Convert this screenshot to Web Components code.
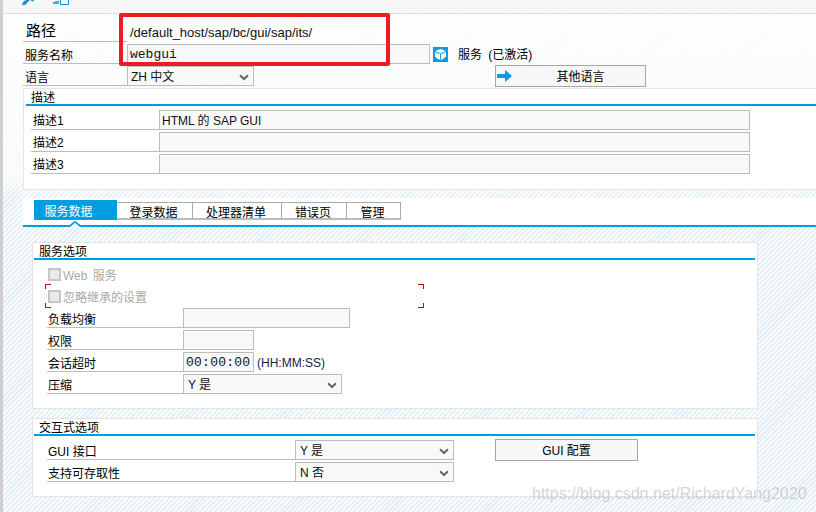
<!DOCTYPE html>
<html>
<head>
<meta charset="utf-8">
<style>
html,body{margin:0;padding:0;background:#fff;}
</style>
</head>
<body>
<sap-page>
  <sap-toolbar></sap-toolbar>
  <sap-header>
    <sap-row label="路径" lw="104" big><sap-field w="303" kind="plain">/default_host/sap/bc/gui/sap/its/</sap-field></sap-row>
    <sap-row label="服务名称" lw="104" lp="2"><sap-field w="303" kind="mono">webgui</sap-field><sap-status>服务 (已激活)</sap-status></sap-row>
    <sap-row label="语言" lw="104" lp="2"><sap-field w="127" kind="select">ZH 中文</sap-field><sap-button w="151" gap="241" arrow>其他语言</sap-button></sap-row>
  </sap-header>
  <sap-panel title="描述" h="102" w="800" x="19" pad="2" tx="5">
    <sap-row label="描述1" lw="128" lp="2" lh="23"><sap-field w="591">HTML 的 SAP GUI</sap-field></sap-row>
    <sap-row label="描述2" lw="128" lp="2" lh="23"><sap-field w="591"></sap-field></sap-row>
    <sap-row label="描述3" lw="128" lp="2" lh="23"><sap-field w="591"></sap-field></sap-row>
  </sap-panel>
  <sap-tabs>
    <sap-tab active w="83">服务数据</sap-tab><sap-tab w="76">登录数据</sap-tab><sap-tab w="89">处理器清单</sap-tab><sap-tab w="65">错误页</sap-tab><sap-tab w="54">管理</sap-tab>
  </sap-tabs>
  <sap-panel title="服务选项" h="167" w="726" x="28" y="15" pad="1" tx="5" bx="13">
    <sap-check>Web 服务</sap-check>
    <sap-check marked>忽略继承的设置</sap-check>
    <sap-row label="负载均衡" lw="136"><sap-field w="167"></sap-field></sap-row>
    <sap-row label="权限" lw="136"><sap-field w="71"></sap-field></sap-row>
    <sap-row label="会话超时" lw="136"><sap-field w="71" kind="mono" style="letter-spacing:.25px">00:00:00</sap-field><sap-hint>(HH:MM:SS)</sap-hint></sap-row>
    <sap-row label="压缩" lw="136"><sap-field w="159" kind="select" style="padding-left:4px">Y 是</sap-field></sap-row>
  </sap-panel>
  <sap-panel title="交互式选项" h="79" w="726" x="28" y="9" pad="1" tx="5" bx="13">
    <sap-row label="GUI 接口" lw="248"><sap-field w="159" kind="select" style="padding-left:4px">Y 是</sap-field><sap-button w="143" gap="41">GUI 配置</sap-button></sap-row>
    <sap-row label="支持可存取性" lw="248"><sap-field w="159" kind="select" style="padding-left:4px">N 否</sap-field></sap-row>
  </sap-panel>
</sap-page>

<script>
const CJK = '"Liberation Sans","Noto Sans CJK SC",sans-serif';

class SapPage extends HTMLElement{
    constructor(){
        super();
        this.attachShadow({ mode: "open" });
    }
    connectedCallback(){
        this.shadowRoot.innerHTML = `
        <style>
        :host{
            display:block;
            position:relative;
            width:816px;
            height:512px;
            overflow:hidden;
            box-sizing:border-box;
            border-left:3px solid #cfcfcf;
            padding-left:1px;
            color:#000;
            font:12px/16px ${CJK};
            background:
              linear-gradient(rgba(255,255,255,.85) 14px, rgba(255,255,255,.55) 180px, rgba(255,255,255,0) 200px),
              repeating-linear-gradient(135deg,#e3edf5 0,#e3edf5 1.5px,#fafcfd 1.5px,#fafcfd 3.5px);
        }
        .redbox{
            position:absolute;
            left:116px;
            top:13px;
            width:271px;
            height:53px;
            box-sizing:border-box;
            border:4px solid #ed1c24;
            border-radius:2px;
        }
        .mark{
            position:absolute;
            left:529px;
            top:484px;
            font:16px/20px "Liberation Sans",sans-serif;
            color:rgba(170,170,170,.5);
            white-space:nowrap;
        }
        </style>
        <slot></slot>
        <div class="redbox"></div>
        <div class="mark">https://blog.csdn.net/RichardYang2020</div>
        `;
    }
}

class SapToolbar extends HTMLElement{
    constructor(){
        super();
        this.attachShadow({ mode: "open" });
    }
    connectedCallback(){
        this.shadowRoot.innerHTML = `
        <style>
        :host{
            display:flex;
            height:14px;
            box-sizing:border-box;
            margin-left:-1px;
            background:#f7f7f7;
            border-bottom:1px solid #dedede;
            padding-left:19px;
            gap:19px;
            overflow:hidden;
        }
        svg{display:block;}
        </style>
        <svg width="12" height="5" viewBox="0 0 12 5"><path d="M0 5 L1 2 L4 0 L8 0 L3 5 Z" fill="#1c8fd2"/><path d="M9 0 H12 L11 1.5 H9.5 Z" fill="#1c8fd2"/></svg>
        <svg width="16" height="6" viewBox="0 0 16 6"><path d="M0 2H2V1H6V4H0Z" fill="#4aa9e2"/><path d="M7 4H15V0H16V5H7Z" fill="#0f94dc"/><path d="M7 0H8V5H7Z" fill="#0f94dc"/></svg>
        `;
    }
}

class SapHeader extends HTMLElement{
    constructor(){
        super();
        this.attachShadow({ mode: "open" });
    }
    connectedCallback(){
        this.shadowRoot.innerHTML = `
        <style>
        :host{
            display:block;
            height:74px;
            box-sizing:border-box;
            padding:6px 0 0 19px;
        }
        </style>
        <slot></slot>
        `;
    }
}

class SapRow extends HTMLElement{
    constructor(){
        super();
        this.attachShadow({ mode: "open" });
    }
    connectedCallback(){
        const big = this.hasAttribute("big");
        this.shadowRoot.innerHTML = `
        <style>
        :host{
            display:flex;
            height:22px;
            box-sizing:border-box;
            padding-top:2px;
        }
        .lb{
            width:${this.getAttribute("lw")}px;
            height:20px;
            flex:none;
            box-sizing:border-box;
            border-bottom:1px solid #bdbdbd;
            padding-left:${big ? 3 : (this.getAttribute("lp") || 1)}px;
            font-size:${big ? 15 : 12}px;
            line-height:${big ? 18 : (this.getAttribute("lh") || 25)}px;
            white-space:nowrap;
        }
        </style>
        <div class="lb">${this.getAttribute("label")}</div>
        <slot></slot>
        `;
    }
}

class SapField extends HTMLElement{
    constructor(){
        super();
        this.attachShadow({ mode: "open" });
    }
    connectedCallback(){
        const kind = this.getAttribute("kind") || "input";
        const mono = kind == "mono";
        const plain = kind == "plain";
        this.shadowRoot.innerHTML = `
        <style>
        :host{
            display:flex;
            align-items:center;
            flex:none;
            width:${this.getAttribute("w")}px;
            height:20px;
            box-sizing:border-box;
            border:${plain ? "0" : "1px solid #bdbdbd"};
            background:${plain ? "transparent" : "#f8f8f8"};
            padding-left:${plain ? 3 : 2}px;
            padding-top:2px;
            white-space:nowrap;
            color:#111;
            ${plain ? "font-size:13px;" : ""}
            ${mono ? 'font:13px/16px "Liberation Mono",monospace;' : ""}
            ${kind == "select" ? "padding-left:3px;" : ""}
        }
        .chev{margin-left:auto;margin-right:4px;}
        </style>
        <slot></slot>
        ${kind == "select" ? '<svg class="chev" width="10" height="7" viewBox="0 0 10 7"><path d="M1 1.2 L5 5 L9 1.2" fill="none" stroke="#666" stroke-width="2"/></svg>' : ""}
        `;
    }
}

class SapStatus extends HTMLElement{
    constructor(){
        super();
        this.attachShadow({ mode: "open" });
    }
    connectedCallback(){
        this.shadowRoot.innerHTML = `
        <style>
        :host{
            display:flex;
            align-items:flex-start;
            height:20px;
            white-space:nowrap;
            line-height:23px;
            word-spacing:3px;
        }
        svg{margin:3px 10px 0 3px;display:block;}
        </style>
        <svg width="15" height="15" viewBox="0 0 15 15">
          <rect width="15" height="15" fill="#0b9be3"/>
          <path d="M7.5 2 Q11 2.5 13 5 V9.5 Q11 12 7.5 13 Q4 12 2 9.5 V5 Q4 2.5 7.5 2 Z" fill="#fff"/>
          <path d="M2.5 5.2 Q7.5 7.8 12.5 5.2 M7.5 7 V12.5" fill="none" stroke="#0b9be3" stroke-width="1"/>
        </svg>
        <slot></slot>
        `;
    }
}

class SapHint extends HTMLElement{
    constructor(){
        super();
        this.attachShadow({ mode: "open" });
    }
    connectedCallback(){
        this.shadowRoot.innerHTML = `
        <style>
        :host{
            display:block;
            margin-left:3px;
            line-height:22px;
            color:#1a1a4a;
            white-space:nowrap;
        }
        </style>
        <slot></slot>
        `;
    }
}

class SapButton extends HTMLElement{
    constructor(){
        super();
        this.attachShadow({ mode: "open" });
    }
    connectedCallback(){
        const arrow = this.hasAttribute("arrow");
        this.shadowRoot.innerHTML = `
        <style>
        :host{
            display:flex;
            align-items:center;
            justify-content:center;
            position:relative;
            flex:none;
            width:${this.getAttribute("w")}px;
            height:22px;
            margin:-1px 0 0 ${this.getAttribute("gap")}px;
            box-sizing:border-box;
            border:1px solid #a6a6a6;
            background:#f7f7f7;
            white-space:nowrap;
            padding-top:2px;
            padding-left:${arrow ? 20 : 0}px;
        }
        svg{position:absolute;left:1px;top:4px;}
        </style>
        ${arrow ? '<svg width="15" height="12" viewBox="0 0 15 12"><path d="M0 4H8V0L15 6L8 12V8H0Z" fill="#0b9be3"/></svg>' : ""}
        <slot></slot>
        `;
    }
}

class SapPanel extends HTMLElement{
    constructor(){
        super();
        this.attachShadow({ mode: "open" });
    }
    connectedCallback(){
        const a = n => this.getAttribute(n);
        const pad = a("pad") || 2;
        this.shadowRoot.innerHTML = `
        <style>
        :host{
            display:block;
            width:${a("w")}px;
            height:${a("h")}px;
            margin:${a("y") || 0}px 0 0 ${a("x")}px;
            box-sizing:border-box;
            border:1px solid #e4e4e4;
            background:#fff;
            padding:0 2px 0 ${pad}px;
        }
        .tt{
            height:17px;
            box-sizing:border-box;
            border-bottom:2px solid #009de0;
            padding-left:${a("tx")}px;
            line-height:18px;
            font-size:12px;
            white-space:nowrap;
        }
        .bd{padding:2px 0 0 ${a("bx") || 5}px;}
        </style>
        <div class="tt">${a("title")}</div>
        <div class="bd"><slot></slot></div>
        `;
    }
}

class SapTabs extends HTMLElement{
    constructor(){
        super();
        this.attachShadow({ mode: "open" });
    }
    connectedCallback(){
        this.shadowRoot.innerHTML = `
        <style>
        :host{
            display:flex;
            position:relative;
            height:29px;
            margin:8px 0 0 19px;
            box-sizing:border-box;
            padding:2px 0 0 11px;
            background:#fff;
            border-bottom:2px solid #009de0;
        }
        svg{position:absolute;left:44px;top:23px;}
        </style>
        <slot></slot>
        <svg width="16" height="7" viewBox="0 0 16 7"><path d="M2 6.5 L8 1.5 L14 6.5 Z" fill="#fff"/><path d="M2 5.5 L8 .8 L14 5.5" fill="none" stroke="#009de0" stroke-width="1.6"/></svg>
        `;
    }
}

class SapTab extends HTMLElement{
    constructor(){
        super();
        this.attachShadow({ mode: "open" });
    }
    connectedCallback(){
        const on = this.hasAttribute("active");
        this.shadowRoot.innerHTML = `
        <style>
        :host{
            display:flex;
            align-items:center;
            justify-content:center;
            flex:none;
            width:${this.getAttribute("w")}px;
            height:20px;
            box-sizing:border-box;
            white-space:nowrap;
            padding-top:4px;
            ${on ? "background:#009de0;color:#fff;padding-right:14px;" :
              "border:1px solid #aaa;border-left:0;border-bottom:2px solid #bbb;margin-top:2px;height:18px;padding-right:2px;"}
        }
        </style>
        <slot></slot>
        `;
    }
}

class SapCheck extends HTMLElement{
    constructor(){
        super();
        this.attachShadow({ mode: "open" });
    }
    connectedCallback(){
        this.shadowRoot.innerHTML = `
        <style>
        :host{
            display:flex;
            position:relative;
            height:22px;
            box-sizing:border-box;
            padding:6px 0 0 1px;
            color:#a8a8a8;
            white-space:nowrap;
            word-spacing:2px;
        }
        .box{
            width:13px;
            height:13px;
            box-sizing:border-box;
            border:2px solid #c6c6c6;
            background:#e8ebee;
            margin-right:2px;
            flex:none;
        }
        .txt{line-height:17px;}
        .c{
            position:absolute;
            width:5px;
            height:4px;
            border:0 solid #d40000;
        }
        .tl{left:-2px;top:0;border-width:1px 0 0 1px;}
        .bl{left:-2px;top:19px;border-width:0 0 1px 1px;}
        .tr{left:371px;top:0;border-width:1px 1px 0 0;}
        .br{left:371px;top:19px;border-width:0 1px 1px 0;}
        </style>
        <div class="box"></div><div class="txt"><slot></slot></div>
        ${this.hasAttribute("marked") ? '<i class="c tl"></i><i class="c bl"></i><i class="c tr"></i><i class="c br"></i>' : ""}
        `;
    }
}

window.customElements.define("sap-page", SapPage);
window.customElements.define("sap-toolbar", SapToolbar);
window.customElements.define("sap-header", SapHeader);
window.customElements.define("sap-row", SapRow);
window.customElements.define("sap-field", SapField);
window.customElements.define("sap-status", SapStatus);
window.customElements.define("sap-hint", SapHint);
window.customElements.define("sap-button", SapButton);
window.customElements.define("sap-panel", SapPanel);
window.customElements.define("sap-tabs", SapTabs);
window.customElements.define("sap-tab", SapTab);
window.customElements.define("sap-check", SapCheck);
</script>
</body>
</html>
